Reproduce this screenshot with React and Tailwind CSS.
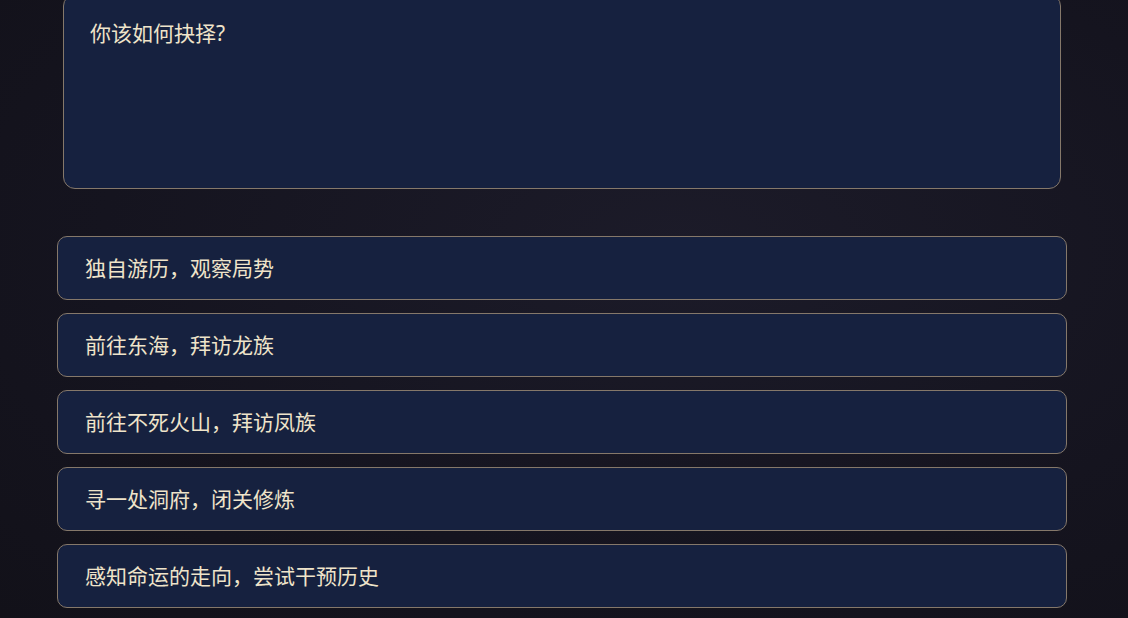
const options = [
  '独自游历，观察局势',
  '前往东海，拜访龙族',
  '前往不死火山，拜访凤族',
  '寻一处洞府，闭关修炼',
  '感知命运的走向，尝试干预历史',
];

export default function App() {
  return (
    <div
      className="min-h-[618px] h-[618px] overflow-hidden bg-[#15141f] bg-[radial-gradient(ellipse_at_60%_40%,#1c1b29_0%,#15141f_60%,#121119_100%)]"
      style={{ fontFamily: '"Noto Sans", "Noto Sans CJK SC", sans-serif' }}
    >
      <div className="w-[1010px] ml-[57px]">
        {/* Story card */}
        <div className="mx-[6px] -mt-[6px] h-[195px] rounded-xl border border-[#85786a] bg-[#16213f] px-[26px] pt-[20px]">
          <p className="text-[21px] leading-[36px] text-[#efe4ca]">你该如何抉择?</p>
        </div>

        {/* Choices */}
        <div className="mt-[47px] flex flex-col gap-[13px]">
          {options.map((text, idx) => (
            <button
              key={idx}
              className="h-[64px] w-full rounded-[10px] border border-[#85786a] bg-[#16213f] px-[27px] pt-[2px] text-left text-[21px] text-[#efe4ca]"
            >
              {text}
            </button>
          ))}
        </div>
      </div>
    </div>
  );
}
